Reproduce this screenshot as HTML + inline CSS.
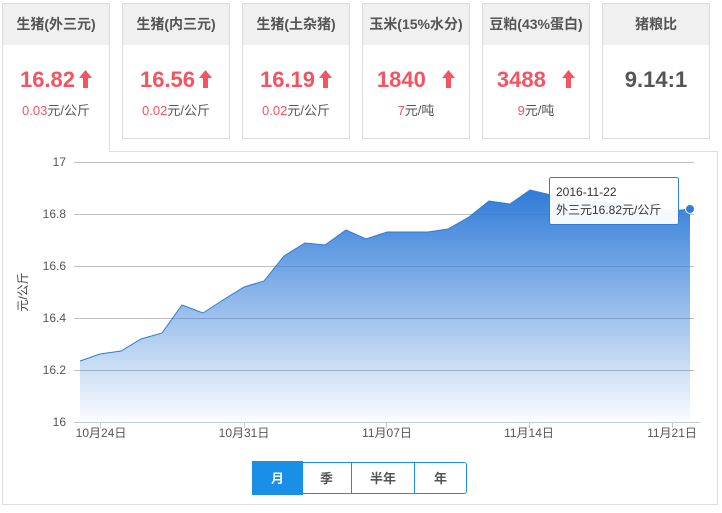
<!DOCTYPE html><html><head><meta charset="utf-8"><style>
body{margin:0;width:722px;height:513px;background:#fff;font-family:"Liberation Sans","Noto Sans CJK SC",sans-serif;position:relative;overflow:hidden}
.c{position:absolute;top:3px;width:108px;height:136px;border:1px solid #ddd;background:#fff;box-sizing:border-box}
.c .h{height:41px;background:#f0f0f0;text-align:center;line-height:41px;font-size:14px;font-weight:bold;color:#555}
.c .v{text-align:center;margin-top:21px;font-size:22px;font-weight:bold;color:#f5535f;height:28px;line-height:28px}
.c .v svg{margin-left:4px;vertical-align:-1px}
.c .s{text-align:center;font-size:13px;color:#555;margin-top:6px}
.c .s i{font-style:normal;color:#f5535f}
.panel{position:absolute;left:2px;top:151px;width:716px;height:354px;border:1px solid #ddd;box-sizing:border-box}
.btn{position:absolute;top:462px;height:32px;line-height:32px;text-align:center;font-size:13px;color:#555;font-weight:bold;border:1px solid #1a8fe8;box-sizing:border-box}
</style></head><body>
<div class="panel"></div>
<div class="c" style="left:2px;height:149px;border-bottom:none;z-index:2"><div class="h">生猪(外三元)</div><div class="v">16.82<svg width="13" height="18" viewBox="0 0 13 18"><path d="M6.5 0L13 8H9V18H4V8H0Z" fill="#f5535f"/></svg></div><div class="s"><i>0.03</i>元/公斤</div></div>
<div class="c" style="left:122px"><div class="h">生猪(内三元)</div><div class="v">16.56<svg width="13" height="18" viewBox="0 0 13 18"><path d="M6.5 0L13 8H9V18H4V8H0Z" fill="#f5535f"/></svg></div><div class="s"><i>0.02</i>元/公斤</div></div>
<div class="c" style="left:242px"><div class="h">生猪(土杂猪)</div><div class="v">16.19<svg width="13" height="18" viewBox="0 0 13 18"><path d="M6.5 0L13 8H9V18H4V8H0Z" fill="#f5535f"/></svg></div><div class="s"><i>0.02</i>元/公斤</div></div>
<div class="c" style="left:362px"><div class="h">玉米(15%水分)</div><div class="v">1840 &nbsp;<svg width="13" height="18" viewBox="0 0 13 18"><path d="M6.5 0L13 8H9V18H4V8H0Z" fill="#f5535f"/></svg></div><div class="s"><i>7</i>元/吨</div></div>
<div class="c" style="left:482px"><div class="h">豆粕(43%蛋白)</div><div class="v">3488 &nbsp;<svg width="13" height="18" viewBox="0 0 13 18"><path d="M6.5 0L13 8H9V18H4V8H0Z" fill="#f5535f"/></svg></div><div class="s"><i>9</i>元/吨</div></div>
<div class="c" style="left:602px"><div class="h">猪粮比</div><div class="v" style="color:#555">9.14:1</div></div>
<svg style="position:absolute;left:0;top:0" width="722" height="513">
<defs><linearGradient id="g" x1="0" y1="0" x2="0" y2="1"><stop offset="0" stop-color="#2f7bd8"/><stop offset="1" stop-color="#2f7bd8" stop-opacity="0.02"/></linearGradient></defs>
<g stroke="#c0c0c0" stroke-width="1"><line x1="74" y1="162.5" x2="694" y2="162.5"/><line x1="74" y1="214.5" x2="694" y2="214.5"/><line x1="74" y1="266.5" x2="694" y2="266.5"/><line x1="74" y1="318.5" x2="694" y2="318.5"/><line x1="74" y1="370.5" x2="694" y2="370.5"/></g>
<path d="M80,361L100,354L121,351L141,339L162,333L182,305L203,313L223,300L244,287L264,281L284,256L305,243L325,245L346,230L366,239L387,232L407,232L428,232L448,229L469,217L489,201L510,204L530,190L551,195L571,197L592,201L612,203L633,205L653,207L673,211L690,209L690,422L80,422Z" fill="url(#g)"/>
<path d="M80,361L100,354L121,351L141,339L162,333L182,305L203,313L223,300L244,287L264,281L284,256L305,243L325,245L346,230L366,239L387,232L407,232L428,232L448,229L469,217L489,201L510,204L530,190L551,195L571,197L592,201L612,203L633,205L653,207L673,211L690,209" fill="none" stroke="#2f7bd8" stroke-width="1"/>
<line x1="74" y1="422.5" x2="700" y2="422.5" stroke="#c0cad8"/>
<g stroke="#c0cad8"><line x1="100.5" y1="422" x2="100.5" y2="428"/><line x1="244.5" y1="422" x2="244.5" y2="428"/><line x1="386.5" y1="422" x2="386.5" y2="428"/><line x1="529.5" y1="422" x2="529.5" y2="428"/><line x1="672.5" y1="422" x2="672.5" y2="428"/></g>
<circle cx="690" cy="209" r="4.5" fill="#2f7bd8" stroke="#fff"/>
<g font-size="12" fill="#555" text-anchor="end" font-family="Liberation Sans,sans-serif"><text x="66" y="166">17</text><text x="66" y="218">16.8</text><text x="66" y="270">16.6</text><text x="66" y="322">16.4</text><text x="66" y="374">16.2</text><text x="66" y="426">16</text></g>
<g font-size="12" fill="#555" text-anchor="middle"><text x="101" y="437">10月24日</text><text x="244" y="437">10月31日</text><text x="387" y="437">11月07日</text><text x="529" y="437">11月14日</text><text x="672" y="437">11月21日</text></g>
<text transform="translate(27,292) rotate(-90)" font-size="12" fill="#444" text-anchor="middle">元/公斤</text>
<rect x="549.5" y="177.5" width="129" height="47" rx="2" fill="#fff" fill-opacity="0.95" stroke="#2f7bd8"/>
<text x="556" y="196" font-size="12" fill="#333">2016-11-22</text>
<text x="556" y="214" font-size="12" fill="#333">外三元16.82元/公斤</text>
</svg>
<div class="btn" style="left:252px;top:461px;height:34px;line-height:34px;width:51px;background:#1a8fe8;color:#fff">月</div>
<div class="btn" style="left:302px;width:50px;border-left:none">季</div>
<div class="btn" style="left:351px;width:64px">半年</div>
<div class="btn" style="left:414px;width:53px;border-radius:0 3px 3px 0">年</div>
</body></html>
